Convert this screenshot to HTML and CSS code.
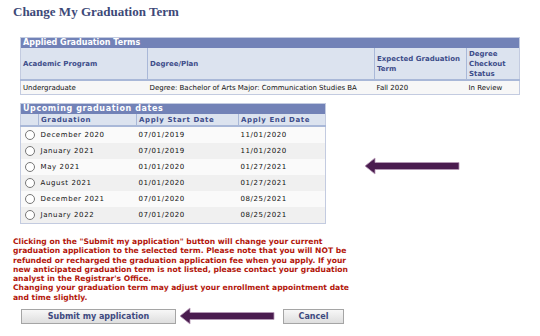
FILE: index.html
```html
<!DOCTYPE html>
<html lang="en">
<head>
    <meta charset="UTF-8">
    <title>Change My Graduation Term</title>
    <link rel="stylesheet" href="styles.css">
</head>
<body>
    <div class="page">
        <h1 class="title">Change My Graduation Term</h1>

        <table class="grid applied">
            <tr><td class="bar" colspan="4">Applied Graduation Terms</td></tr>
            <tr class="heads">
                <th class="c-prog">Academic Program</th>
                <th class="c-plan">Degree/Plan</th>
                <th class="c-term">Expected Graduation Term</th>
                <th class="c-stat">Degree Checkout Status</th>
            </tr>
            <tr class="row">
                <td>Undergraduate</td>
                <td>Degree: Bachelor of Arts Major: Communication Studies BA</td>
                <td>Fall 2020</td>
                <td>In Review</td>
            </tr>
        </table>

        <table class="grid dates">
            <tr><td class="bar" colspan="4">Upcoming graduation dates</td></tr>
            <tr class="heads">
                <th class="c-pick"></th>
                <th class="c-grad">Graduation</th>
                <th class="c-start">Apply Start Date</th>
                <th>Apply End Date</th>
            </tr>
            <tr class="row"><td><span class="radio"></span></td><td>December 2020</td><td>07/01/2019</td><td>11/01/2020</td></tr>
            <tr class="row alt"><td><span class="radio"></span></td><td>January 2021</td><td>07/01/2019</td><td>11/01/2020</td></tr>
            <tr class="row"><td><span class="radio"></span></td><td>May 2021</td><td>01/01/2020</td><td>01/27/2021</td></tr>
            <tr class="row alt"><td><span class="radio"></span></td><td>August 2021</td><td>01/01/2020</td><td>01/27/2021</td></tr>
            <tr class="row"><td><span class="radio"></span></td><td>December 2021</td><td>07/01/2020</td><td>08/25/2021</td></tr>
            <tr class="row alt"><td><span class="radio"></span></td><td>January 2022</td><td>07/01/2020</td><td>08/25/2021</td></tr>
        </table>

        <!-- annotation arrow pointing at the May 2021 row -->
        <svg class="arrow arrow-row" width="96" height="18" viewBox="0 0 96 18">
            <path d="M1 9 L11 1 L11 5.5 L95 5.5 L95 12.5 L11 12.5 L11 17 Z" fill="#4a1c4f" stroke="#b79ab8" stroke-width="0.8"/>
        </svg>

        <p class="notice">
            Clicking on the "Submit my application" button will change your current<br>
            graduation application to the selected term. Please note that you will NOT be<br>
            refunded or recharged the graduation application fee when you apply. If your<br>
            new anticipated graduation term is not listed, please contact your graduation<br>
            analyst in the Registrar's Office.<br>
            Changing your graduation term may adjust your enrollment appointment date<br>
            and time slightly.
        </p>

        <div class="actions">
            <button class="btn submit">Submit my application</button>
            <svg class="arrow-btn" width="96" height="18" viewBox="0 0 96 18">
                <path d="M1 9 L11 1 L11 5.5 L95 5.5 L95 12.5 L11 12.5 L11 17 Z" fill="#4a1c4f" stroke="#b79ab8" stroke-width="0.8"/>
            </svg>
            <button class="btn cancel">Cancel</button>
        </div>
    </div>
</body>
</html>
```

FILE: styles.css
```css
body {
    margin: 0;
    background-color: #fff;
    font-family: "DejaVu Sans", Verdana, sans-serif;
}

.page {
    position: relative;
    padding: 4px 0 0 13px;
}

.title {
    margin: 0 0 17px 0;
    font-family: "Liberation Serif", "Times New Roman", serif;
    font-size: 13px;
    font-weight: bold;
    color: #3d4978;
    line-height: 16px;
}

.grid {
    margin-left: 7px;
    border-collapse: collapse;
    border: 1px solid #c3cbe0;
    font-size: 7px;
}

.grid td, .grid th {
    padding: 0 2px;
    text-align: left;
    vertical-align: middle;
}

.bar {
    background-color: #7282b7;
    color: #fff;
    font-weight: bold;
    font-size: 8px;
    height: 10px;
    line-height: 10px;
}

.heads th {
    background-color: #dce3ef;
    color: #3e4d8a;
    font-weight: bold;
    border-right: 1px solid #a9b8d8;
    border-bottom: 2px solid #a9b8d8;
}

.heads th:last-child {
    border-right: none;
}

.row td {
    background-color: #f7f7f7;
    color: #111;
}

.applied {
    width: 500px;
}

.applied .heads th {
    height: 31px;
    line-height: 10px;
}

.applied .row td {
    height: 13px;
}

.c-prog { width: 122px; }
.c-plan { width: 222px; }
.c-term { width: 87px; }

.dates {
    margin-top: 8px;
    width: 306px;
    letter-spacing: 0.6px;
}

.dates .heads th {
    height: 11px;
}

.dates .row td {
    height: 16px;
    background-color: #fafafa;
}

.dates .row.alt td {
    background-color: #f0f0f0;
}

.c-pick { width: 13px; }
.c-grad { width: 93px; }
.c-start { width: 97px; }

.radio {
    display: block;
    width: 8px;
    height: 8px;
    margin-left: 2px;
    border: 1px solid #777;
    border-radius: 50%;
    background-color: #fff;
}

.arrow-row {
    position: absolute;
    left: 364px;
    top: 157px;
}

.notice {
    margin: 13px 0 0 0;
    font-size: 7.6px;
    line-height: 9.3px;
    font-weight: bold;
    color: #b3170c;
}

.actions {
    display: flex;
    align-items: center;
    margin: 5px 0 0 8px;
}

.btn {
    height: 15px;
    padding: 0;
    border: 1px solid #a5a5a5;
    background: linear-gradient(#f7f7f7, #dedede);
    color: #3e4a80;
    font-family: "DejaVu Sans", Verdana, sans-serif;
    font-size: 8px;
    font-weight: bold;
}

.submit {
    width: 155px;
}

.arrow-btn {
    margin-left: 3px;
}

.cancel {
    width: 61px;
    margin-left: 8px;
}
```
